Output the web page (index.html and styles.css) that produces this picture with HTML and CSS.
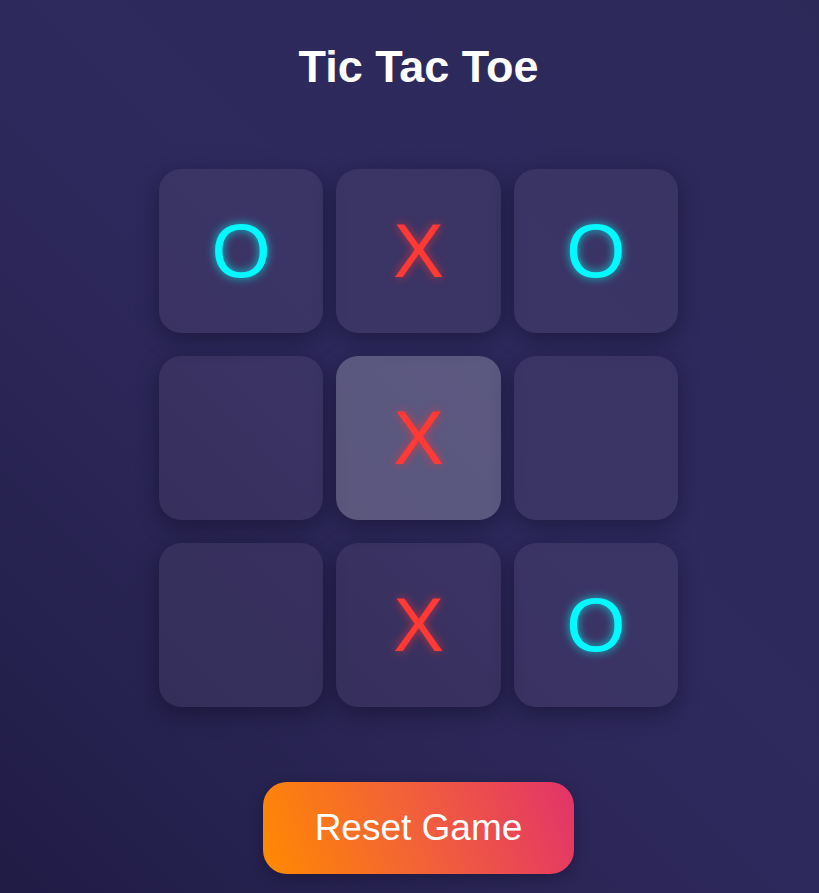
FILE: index.html
```html
<!DOCTYPE html>
<html lang="en">
<head>
<meta charset="utf-8">
<title>Tic Tac Toe</title>
<link rel="stylesheet" href="styles.css">
</head>
<body>
<main class="game">
  <h1 class="title">Tic Tac Toe</h1>
  <div class="board">
    <div class="cell o">O</div>
    <div class="cell x">X</div>
    <div class="cell o">O</div>
    <div class="cell"></div>
    <div class="cell x hover">X</div>
    <div class="cell"></div>
    <div class="cell"></div>
    <div class="cell x">X</div>
    <div class="cell o">O</div>
  </div>
  <button class="reset">Reset Game</button>
</main>
</body>
</html>
```
FILE: styles.css
```css
html, body {
  margin: 0;
  padding: 0;
  height: 100%;
}
body {
  background: linear-gradient(45deg, #201c46 0%, #2b2656 35%, #2f2a5e 55%, #2c2858 100%);
  font-family: "Liberation Sans", Arial, sans-serif;
  color: #fff;
  overflow: hidden;
}
.game {
  display: flex;
  flex-direction: column;
  align-items: center;
  padding-left: 18px;
  padding-top: 36px;
}
.title {
  margin: 0;
  font-size: 45px;
  font-weight: bold;
  line-height: 62px;
}
.board {
  margin-top: 71px;
  display: grid;
  grid-template-columns: repeat(3, 164.33px);
  grid-auto-rows: 164px;
  column-gap: 13px;
  row-gap: 23px;
}
.cell {
  background: rgba(160, 150, 170, 0.11);
  border-radius: 22px;
  box-shadow: 0 6px 22px rgba(10, 8, 30, 0.45);
  display: flex;
  align-items: center;
  justify-content: center;
  font-size: 76px;
  line-height: 1;
}
.cell.hover {
  background: rgba(255, 255, 255, 0.22);
}
.o {
  color: #00fbff;
  text-shadow: 0 0 10px rgba(0, 255, 255, 0.75);
}
.x {
  color: #ff3a35;
  text-shadow: 0 0 10px rgba(255, 50, 50, 0.7);
}
.reset {
  margin-top: 75px;
  width: 311px;
  height: 92px;
  border: none;
  border-radius: 24px;
  background: linear-gradient(70deg, #ff8a00 0%, #f2603a 50%, #e2336a 100%);
  color: #fff;
  font-family: "Liberation Sans", Arial, sans-serif;
  font-size: 37px;
  box-shadow: 0 4px 14px rgba(10, 8, 30, 0.3);
}
```
